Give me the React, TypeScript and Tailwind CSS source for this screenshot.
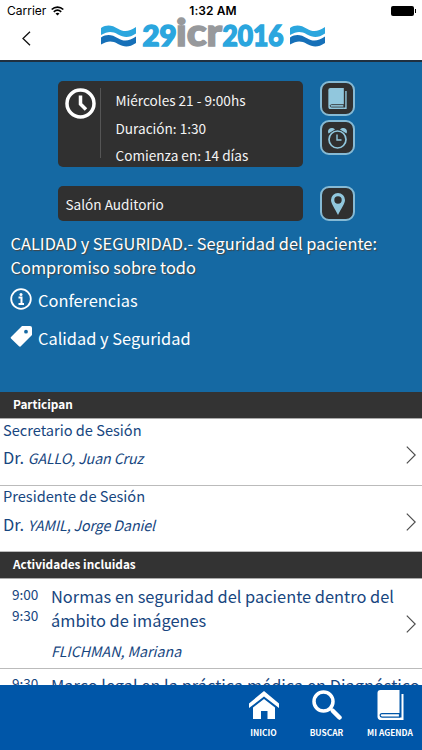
import type { ReactNode } from "react";

type Participant = {
    role: string;
    title: string;
    name: string;
};

const participants: Participant[] = [
    { role: "Secretario de Sesión", title: "Dr.", name: "GALLO, Juan Cruz" },
    { role: "Presidente de Sesión", title: "Dr.", name: "YAMIL, Jorge Daniel" },
];

function Waves() {
    return (
        <svg width="35" height="22" viewBox="0 0 35 22" className="shrink-0">
            <path d="M0 3C6-.9 11 .2 17 3.800S28 6.800 35 2V8.500C28 13.300 23 12.800 17 9.500S7 6.200 0 10Z" fill="#2ba6de" />
            <path d="M0 12.500C6 8.600 11 9.700 17 13.300S28 16.300 35 11.500V18C28 22.800 23 22.300 17 19S7 15.700 0 19.500Z" fill="#1670b8" />
        </svg>
    );
}

function Logo() {
    return (
        <div className="flex items-end">
            <Waves />
            <svg width="154" height="44" viewBox="0 0 154 44" className="overflow-visible font-['Lato',sans-serif] font-black" strokeWidth="1.500">
                <text x="6.500" y="43" fontSize="27.500" textLength="34" lengthAdjust="spacingAndGlyphs" fill="#2ba6de" stroke="#2ba6de">29</text>
                <text x="40" y="43" fontSize="38" textLength="46" lengthAdjust="spacingAndGlyphs" fill="#97999c" stroke="#97999c">icr</text>
                <text x="86.500" y="43" fontSize="27.500" textLength="61" lengthAdjust="spacingAndGlyphs" fill="#2ba6de" stroke="#2ba6de">2016</text>
            </svg>
            <Waves />
        </div>
    );
}

function Chevron() {
    return (
        <svg width="10" height="18" viewBox="0 0 10 18" fill="none" stroke="#4d4d4d" strokeWidth="1.200" className="shrink-0">
            <path d="M.8.600L9.200 9 .8 17.400" />
        </svg>
    );
}

function BookIcon({ size, line }: { size: number; line: string }) {
    return (
        <svg width={size} height={size * 1.12} viewBox="0 0 27 30" fill="currentColor">
            <path d="M3.500 0H22.500V30H4C1.500 30 .5 28.500 .5 26.500V3C.5 1 1.500 0 3.500 0Z" />
            <path d="M24.500 4H26.500V30H22V27.500H24.500Z" />
            <path d="M22.500 23.500H5C2.500 23.500 2.500 27 5 27H22.500Z" fill="none" stroke={line} strokeWidth="1.200" />
        </svg>
    );
}

function IconButton({ children }: { children: ReactNode }) {
    return (
        <button className="flex size-[35px] items-center justify-center rounded-[9px] border-2 border-[#85bad5] bg-[#303030] text-[#91c7dd]">
            {children}
        </button>
    );
}

function SectionTitle({ children }: { children: ReactNode }) {
    return (
        <h2 className="h-[27px] shrink-0 border-b border-[#aaa] bg-[#333] pl-[13px] text-[11.800px] leading-[24px] font-bold text-white">
            {children}
        </h2>
    );
}

export default function App() {
    return (
        <div className="flex h-[750px] w-[422px] flex-col overflow-hidden bg-white font-['Noto_Sans_CJK_SC',sans-serif] text-[#174680]">
            {/* Status bar and logo */}
            <header className="relative h-[62px] shrink-0 border-b-2 border-[#20303f] bg-white text-black">
                <div className="flex h-[22px] items-center justify-between pr-[6px] pl-[7px] font-['Inter',sans-serif] text-[12px]">
                    <div className="flex w-20 items-center gap-[5px]">
                        <span>Carrier</span>
                        <svg width="13" height="10" viewBox="0 0 13 10" fill="none" stroke="#000" strokeWidth="1.700">
                            <path d="M.7 3.500C4 .2 9 .2 12.300 3.500M2.800 5.800C5 3.700 8 3.700 10.200 5.800" />
                            <path d="M6.500 9.500L4.500 7.500Q6.500 6 8.500 7.500Z" fill="#000" stroke="none" />
                        </svg>
                    </div>
                    <span className="relative z-10 ml-[3px] font-semibold tracking-[0.100px]">1:32 AM</span>
                    <div className="flex w-20 items-center justify-end">
                        <div className="h-[10px] w-[23px] rounded-[2px] bg-black" />
                        <div className="ml-px h-1 w-px bg-black" />
                    </div>
                </div>
                <svg width="9" height="15" viewBox="0 0 9 15" fill="none" stroke="#111" strokeWidth="1.300" className="mt-[9px] ml-[22px]">
                    <path d="M8 .7L1 7.500 8 14.300" />
                </svg>
                <div className="absolute top-[3px] left-[101px]">
                    <Logo />
                </div>
            </header>

            {/* Session summary */}
            <section className="h-[330px] shrink-0 bg-[#1569a3] pt-[19px] text-white">
                <div className="flex gap-[17px] pl-[58px]">
                    <div className="flex h-[86px] w-[245px] rounded-[5px] bg-[#303030] pt-[7px] pl-[7px]">
                        <svg width="31" height="31" viewBox="0 0 31 31" fill="none" stroke="#fff">
                            <circle cx="15.500" cy="15.500" r="13.500" strokeWidth="3.500" />
                            <path d="M15.500 7.500V16L21 21.500" strokeWidth="3.500" />
                        </svg>
                        <div className="ml-[4px] h-[70px] w-px bg-[#555]" />
                        <div className="-mt-[1px] ml-[14.500px] text-[13.600px] leading-[27.500px] text-[#f4f4f4]">
                            <p>Miércoles 21 - 9:00hs</p>
                            <p>Duración: 1:30</p>
                            <p>Comienza en: 14 días</p>
                        </div>
                    </div>
                    <div className="flex flex-col gap-[4px]">
                        <IconButton><BookIcon size={19} line="#303030" /></IconButton>
                        <IconButton>
                            <svg width="21" height="22" viewBox="0 0 21 22" fill="none" stroke="currentColor" className="shrink-0">
                                <circle cx="10.500" cy="12.500" r="8.500" strokeWidth="1.700" />
                                <path d="M10 7.500V13H14.500" strokeWidth="1.400" />
                                <path d="M1.500 6.500C-.5 2 4.500-1 8 2.500ZM19.500 6.500C21.500 2 16.500-1 13 2.500Z" fill="currentColor" stroke="none" />
                            </svg>
                        </IconButton>
                    </div>
                </div>
                <div className="mt-[19px] flex gap-[17px] pl-[58px]">
                    <div className="h-[35px] w-[245px] rounded-[5px] bg-[#303030] pl-[7.500px] text-[13.600px] leading-[36px] text-[#f4f4f4]">
                        Salón Auditorio
                    </div>
                    <IconButton>
                        <svg width="14" height="22" viewBox="0 0 14 22" fill="currentColor">
                            <path fillRule="evenodd" d="M7 0A7 7 0 0 1 14 7C14 11 10 15.500 7 22 4 15.500 0 11 0 7A7 7 0 0 1 7 0ZM7 3.300A3.700 3.700 0 1 0 7 10.700 3.700 3.700 0 1 0 7 3.300Z" />
                        </svg>
                    </IconButton>
                </div>

                <h1 className="mt-[11px] pl-[10.500px] text-[16.400px] leading-[23.500px] whitespace-nowrap [text-shadow:1px_1px_1px_#444]">
                    CALIDAD y SEGURIDAD.- Seguridad del paciente:
                    <br />
                    Compromiso sobre todo
                </h1>
                <div className="mt-[7px] flex h-[28px] items-center gap-[6px] pl-[10px] text-[16.400px]">
                    <svg width="22" height="22" viewBox="0 0 22 22" fill="none" stroke="#fff" className="-mt-[3px]">
                        <circle cx="11" cy="11" r="9.800" strokeWidth="1.800" />
                        <circle cx="11" cy="6.500" r="1.500" fill="#fff" stroke="none" />
                        <path d="M8.500 9.500H11.500V16M8.500 16H14" strokeWidth="2" />
                    </svg>
                    <span>Conferencias</span>
                </div>
                <div className="mt-[10px] flex h-[28px] items-center gap-[6px] pl-[10px] text-[16.400px]">
                    <svg width="22" height="22" viewBox="0 0 22 22" fill="#fff" className="-mt-[5px]">
                        <path fillRule="evenodd" d="M12 1H20Q22 1 22 3V10L10.500 21.500Q9.800 22 9 21.300L1 13.500Q.2 12.700 1 12ZM16 4.800A1.900 1.900 0 1 0 16 8.600 1.900 1.900 0 1 0 16 4.800Z" />
                    </svg>
                    <span>Calidad y Seguridad</span>
                </div>
            </section>

            {/* Participants */}
            <SectionTitle>Participan</SectionTitle>
            {participants.map((p, i) => (
                <div key={p.name} className={i === 0 ? "flex h-[67px] shrink-0 justify-between border-b border-[#bbb] pr-[6px] pl-[3px]" : "flex h-[66px] shrink-0 justify-between border-b border-[#bbb] pr-[6px] pl-[3px]"}>
                    <div>
                        <p className={i === 0 ? "-mt-px text-[14.600px] leading-[24px]" : "-mt-[2px] text-[14.600px] leading-[24px]"}>{p.role}</p>
                        <p className={i === 0 ? "mt-[3px] text-[16.400px] leading-[24px]" : "mt-[4px] text-[16.400px] leading-[24px]"}>
                            {p.title} <em className="text-[14.200px] tracking-[-0.100px]">{p.name}</em>
                        </p>
                    </div>
                    <div className="mt-[27px]"><Chevron /></div>
                </div>
            ))}

            {/* Activities */}
            <SectionTitle>Actividades incluidas</SectionTitle>
            <div className="flex h-[90px] shrink-0 border-b border-[#bbb] pr-[6px] pl-[12px]">
                <div className="w-[39px] pt-[5px] text-[13.600px] leading-[20.500px]">
                    <p>9:00</p>
                    <p>9:30</p>
                </div>
                <div className="flex-1 pt-[5px] whitespace-nowrap">
                    <p className="text-[16.400px] leading-[24px]">
                        Normas en seguridad del paciente dentro del
                        <br />
                        ámbito de imágenes
                    </p>
                    <p className="mt-[8px] text-[14.200px] leading-[22px] italic">FLICHMAN, Mariana</p>
                </div>
                <div className="mt-[36px]"><Chevron /></div>
            </div>
            <div className="flex h-[16px] shrink-0 overflow-hidden pl-[12px] whitespace-nowrap">
                <span className="w-[39px] shrink-0 pt-[4px] text-[13.600px] leading-[20px]">9:30</span>
                <span className="pt-[4px] text-[16.400px] leading-[24px]">Marco legal en la práctica médica en Diagnóstico</span>
            </div>

            {/* Bottom navigation */}
            <nav className="flex h-[65px] shrink-0 justify-end bg-[#0056a8] text-[8.400px] leading-[14px] font-bold text-white">
                <div className="flex w-[63px] flex-col items-center pt-[6px]">
                    <svg width="30" height="28" viewBox="0 0 30 28" fill="#fff" className="mb-[6px]">
                        <path d="M15 0L30 12.500V17L15 5.500 0 17V12.500Z" />
                        <path d="M15 8L26 16.500V28H18.500V20H12V28H4V16.500Z" />
                    </svg>
                    INICIO
                </div>
                <div className="flex w-[63px] flex-col items-center pt-[5px]">
                    <svg width="30" height="30" viewBox="0 0 30 30" fill="none" stroke="#fff" className="mb-[5px]">
                        <circle cx="11.500" cy="11.500" r="9.500" strokeWidth="3.500" />
                        <path d="M18 18L21 21" strokeWidth="3" />
                        <path d="M21 21L27.500 27.500" strokeWidth="4.500" strokeLinecap="round" />
                    </svg>
                    BUSCAR
                </div>
                <div className="flex w-[64px] flex-col items-center pt-[5px]">
                    <div className="mb-[5px] h-[30px]"><BookIcon size={27} line="#0056a8" /></div>
                    <span className="whitespace-nowrap">MI AGENDA</span>
                </div>
            </nav>
        </div>
    );
}
